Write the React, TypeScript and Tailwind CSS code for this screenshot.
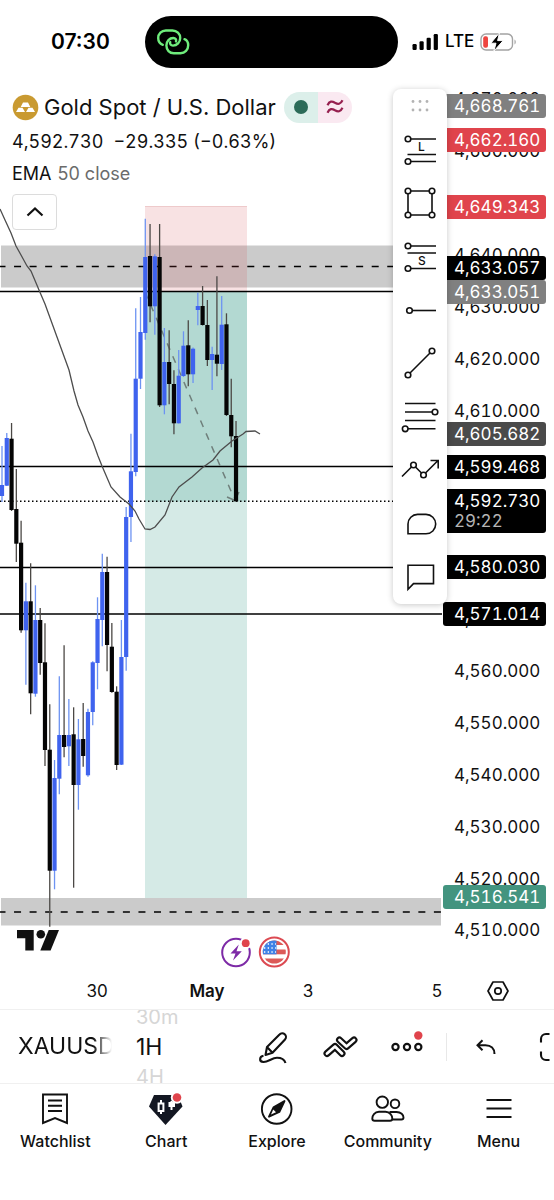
import type { ReactNode } from "react";
import clsx from "clsx";

const HEADER_HEIGHT = 84;
const CANDLE_STEP = 4.776;
const PX_PER_UNIT = 5.195;

const UP = "#3f63ee";
const DOWN = "#050505";

// body top, body bottom, wick top, wick bottom, 1 = up
const candles: [number, number, number, number, number][] = [
  [485, 496, 446, 502, 1],
  [438, 485.7, 433, 486, 1],
  [438.7, 510, 423, 511, 0],
  [509, 543.7, 469, 562, 0],
  [542.7, 630.3, 520.7, 632.7, 0],
  [601.3, 630.3, 582.7, 684.7, 1],
  [601.3, 693.3, 563.3, 714.3, 0],
  [620, 693.7, 585.3, 696.7, 1],
  [620, 663, 608, 674.7, 0],
  [662.3, 750, 623.3, 766, 0],
  [749.7, 870.7, 704.3, 926.7, 0],
  [778, 870.7, 760, 889.3, 1],
  [735, 778.7, 676.3, 794.3, 1],
  [735, 747, 645.3, 757.3, 0],
  [735, 746.3, 699, 766, 1],
  [734.3, 785, 707.3, 887.7, 0],
  [739.3, 785, 719, 809.7, 1],
  [739, 756, 703, 766.7, 0],
  [712, 775.3, 708.7, 776.7, 1],
  [662.3, 712, 661.3, 725.3, 1],
  [619, 663, 597.3, 689.3, 1],
  [572, 620, 553.7, 646.3, 1],
  [572, 645, 556.7, 671.3, 0],
  [646.7, 692, 623, 692.7, 0],
  [691.7, 765, 686.3, 770, 0],
  [657, 764.7, 620, 765, 1],
  [517, 657, 507, 670.7, 1],
  [471.3, 517, 433.7, 542, 1],
  [378.7, 472, 308.3, 476.3, 1],
  [332, 378.7, 297, 389, 1],
  [257, 333, 218.7, 339.7, 1],
  [256, 306.3, 224, 322.3, 0],
  [256.3, 306.3, 254.3, 334.7, 1],
  [257, 405.3, 224, 407, 0],
  [362, 405.3, 328, 414.3, 1],
  [362, 384, 330.3, 404.3, 0],
  [384, 423.3, 370.3, 434.3, 0],
  [375.7, 423.3, 350, 423.5, 1],
  [345.7, 376, 331.3, 377, 1],
  [345.3, 374.3, 320.3, 386.3, 0],
  [348.7, 374.3, 347.5, 383, 1],
  [306, 310, 292.7, 325.3, 1],
  [306, 325, 286, 325.5, 0],
  [325, 360, 300, 366, 0],
  [354, 360, 346.7, 390, 1],
  [354.7, 363.7, 276.3, 376.3, 0],
  [324.7, 364, 296, 370, 1],
  [324.3, 415, 313.3, 416, 0],
  [415, 436.3, 378.7, 447.3, 0],
  [436, 501.3, 421, 501.5, 0],
];

const emaPoints =
  "0,209 5,220 11,233 16,246 21,255 27,266 31,271 39,290 45,304 69,370 74,391 78,405 83,417 88,431 93,442 98,456 102,466 111,487 120,497 129,504 135,511 139,519 145,529 150,529.5 155,527 165,515 172,497 179,487 192,477 202,468 213,460 220,451 232,441 243,434 246,431.5 255,431 260,434";

const levels = [291.5, 466.5, 567.5, 614];

// these ticks sit fully behind a price tag
const coveredTicks = [4650, 4600, 4590];
const ticks = Array.from({ length: 17 }, (_, i) => 4670 - i * 10).filter(
  (price) => !coveredTicks.includes(price)
);

const tags = [
  { text: "4,668.761", y: 106, bg: "bg-[#808080]" },
  { text: "4,662.160", y: 140, bg: "bg-[#e0444c]" },
  { text: "4,649.343", y: 207, bg: "bg-[#e0444c]" },
  { text: "4,633.057", y: 268, bg: "bg-black" },
  { text: "4,633.051", y: 292, bg: "bg-[#808080]" },
  { text: "4,605.682", y: 434, bg: "bg-[#4a4a4a]" },
  { text: "4,599.468", y: 467, bg: "bg-black" },
  { text: "4,592.730", y: 501, bg: "bg-black", countdown: "29:22" },
  { text: "4,580.030", y: 567, bg: "bg-black" },
  { text: "4,571.014", y: 614, bg: "bg-black" },
  { text: "4,516.541", y: 897, bg: "bg-[#43947f]" },
];

const dates = [
  { text: "30", x: 97 },
  { text: "May", x: 207, bold: true },
  { text: "3", x: 308 },
  { text: "5", x: 437 },
];

function priceToY(price: number) {
  return (4620 - price) * PX_PER_UNIT + 359 - HEADER_HEIGHT;
}

function Icon({ size, children, width = 1.6 }: { size: number; children: ReactNode; width?: number }) {
  return (
    <svg
      width={size}
      height={size}
      viewBox={`0 0 ${size} ${size}`}
      fill="none"
      stroke="#111"
      strokeWidth={width}
      className="shrink-0"
      aria-hidden="true"
    >
      {children}
    </svg>
  );
}

const glyph = { fill: "#111", stroke: "none", fontSize: 12, fontFamily: "Inter, sans-serif", fontWeight: 500 };

const drawingTools = [
  {
    label: "Long position",
    icon: (
      <>
        <circle cx="8" cy="9" r="2.8" />
        <path d="M11 9H36M7.5 24.5H36M11 31.5H36" />
        <circle cx="8" cy="31.5" r="2.8" />
        <text x="18" y="21" {...glyph}>L</text>
      </>
    ),
  },
  {
    label: "Rectangle",
    icon: (
      <>
        <path d="M11 8H29M11 32H29M8 11V29M32 11V29" />
        <circle cx="8" cy="8" r="2.8" />
        <circle cx="32" cy="8" r="2.8" />
        <circle cx="8" cy="32" r="2.8" />
        <circle cx="32" cy="32" r="2.8" />
      </>
    ),
  },
  {
    label: "Short position",
    icon: (
      <>
        <circle cx="8" cy="9" r="2.8" />
        <path d="M11 9H36M7.5 16H36M11 31.5H36" />
        <circle cx="8" cy="31.5" r="2.8" />
        <text x="18" y="28" {...glyph}>S</text>
      </>
    ),
  },
  {
    label: "Horizontal ray",
    icon: (
      <>
        <circle cx="9.5" cy="20.5" r="2.8" />
        <path d="M12.5 20.5H36" />
      </>
    ),
  },
  {
    label: "Trend line",
    icon: (
      <>
        <circle cx="32" cy="8" r="2.8" />
        <circle cx="8" cy="32" r="2.8" />
        <path d="M10 30 30 10" />
      </>
    ),
  },
  {
    label: "Fib retracement",
    icon: (
      <>
        <path d="M5 6.5H35.5M5 15H32M5 23.5H35.5M8 31.8H35.5" />
        <circle cx="35" cy="15" r="2.8" />
        <circle cx="5.2" cy="31.8" r="2.8" />
      </>
    ),
  },
  {
    label: "Path",
    icon: (
      <>
        <path d="M2 26.5 11.5 17M15.5 17 21.5 23M25.5 23 38 10.5M30.5 10.5H38.2V18.5" />
        <circle cx="13.5" cy="15" r="2.8" />
        <circle cx="23.5" cy="25" r="2.8" />
      </>
    ),
  },
  {
    label: "Callout",
    icon: <path d="M8 29.8V20A9.6 9.6 0 0 1 17.6 10.4H26A9.7 9.7 0 0 1 26 29.8Z" />,
  },
  {
    label: "Comment",
    icon: <path d="M8 8.2H33.5V26.6H13.5L8 32.2Z" />,
  },
];

const navItems = [
  {
    label: "Watchlist",
    icon: (
      <Icon size={36} width={1.9}>
        <path d="M6 3.5H30V32L18 27 6 32ZM11 9.5H25M11 14.7H25M11 20H25" />
      </Icon>
    ),
  },
  {
    label: "Chart",
    icon: (
      <svg width="36" height="36" viewBox="0 0 36 36" aria-hidden="true">
        <path d="M6 4H30L34.5 15.5 17.5 34 1 15.5Z" fill="#131722" />
        <path d="M13 9V12M13 20V23M10.6 12.5H15.4V20H10.6Z" stroke="#fff" strokeWidth="2" fill="none" />
        <path d="M23.5 10V19" stroke="#fff" strokeWidth="2" />
        <path d="M20.5 11H27V16H20.5Z" fill="#fff" />
        <circle cx="29" cy="6.5" r="6.2" fill="#fff" />
        <circle cx="29" cy="6.5" r="4.3" fill="#e0444c" />
      </svg>
    ),
  },
  {
    label: "Explore",
    icon: (
      <Icon size={36} width={1.9}>
        <circle cx="17.7" cy="18" r="14.8" />
        <path d="M25.5 10 14.5 16.3 10 25.7 20.3 21Z" fill="#111" strokeLinejoin="round" />
        <path d="M14.2 18.5 12 23.5 17 21.3Z" fill="#fff" stroke="none" />
      </Icon>
    ),
  },
  {
    label: "Community",
    icon: (
      <Icon size={36} width={1.9}>
        <circle cx="12.3" cy="11.2" r="5.7" />
        <path d="M9 20.8H15.5C20 20.8 22.3 24.500 22.3 27.500 22.3 29.200 21.500 29.800 20 29.800H4.600C3.100 29.800 2.300 29.200 2.300 27.500 2.300 24.500 4.500 20.800 9 20.800Z" strokeLinejoin="round" />
        <circle cx="25" cy="12.8" r="4.3" />
        <path d="M19.5 21H26.5C31 21 33.5 24 33.5 26.500 33.500 28 32.800 28.500 31.500 28.500H22.5" strokeLinejoin="round" />
      </Icon>
    ),
  },
  {
    label: "Menu",
    icon: (
      <Icon size={36} width={1.9}>
        <path d="M5.5 9H30.5M5.5 17.5H30.5M5.5 26H30.5" />
      </Icon>
    ),
  },
];

function StatusBar() {
  return (
    <div className="flex h-[84px] shrink-0 items-center pl-[51px]">
      <span className="w-[94px] text-[21px] font-semibold">07:30</span>
      <div className="flex h-[52px] w-[253px] shrink-0 items-center rounded-full bg-black pl-[11px]">
        <svg width="34" height="28" viewBox="0 0 34 28" fill="none" stroke="#6fec7c" strokeWidth="2.4" strokeLinecap="round" aria-hidden="true">
          <path d="M6.800 16.800C4 15.800 2.200 13.300 2.200 10 2.200 5.800 5.500 2.500 9.800 2.500H16.500C20.800 2.500 24.200 5.800 24.200 10 24.200 14.300 21 17.600 17 17.600 14.800 17.600 13.600 16 14.200 14.200" />
          <path d="M28.500 11.200C31 12.200 32.200 14.500 32.200 17.300 32.200 21.800 29 25.200 24.500 25.200H17.800C13.500 25.200 10.400 22 10.400 17.600 10.400 13 13.500 10 17.300 10 19.500 10 20.600 11.600 20 13.400" />
        </svg>
      </div>
      <div className="ml-3.5 flex items-center gap-1.5">
        <svg width="27" height="18" viewBox="0 0 27 18" aria-hidden="true">
          <rect x="0.5" y="11" width="4.2" height="6" rx="1.2" />
          <rect x="7.5" y="8.3" width="4.2" height="8.7" rx="1.2" />
          <rect x="14.6" y="4.7" width="4.2" height="12.3" rx="1.2" />
          <rect x="21.7" y="1" width="4.2" height="16" rx="1.2" />
        </svg>
        <span className="text-[17px] font-medium">LTE</span>
        <svg width="37" height="20" viewBox="0 0 37 20" fill="none" aria-hidden="true">
          <rect x="1" y="2" width="31.5" height="16" rx="5" stroke="#a3a3a3" strokeWidth="1.4" />
          <path d="M34.5 7.5C36.2 8.3 36.2 11.7 34.5 12.5Z" fill="#a3a3a3" />
          <rect x="3.2" y="4.3" width="4.8" height="11.4" rx="2" fill="#ee4540" />
          <path d="M19.5 0.8 10.8 11.2H16L13.8 19.2 23.2 8.6H17.6Z" fill="#000" stroke="#fff" strokeWidth="1" />
        </svg>
      </div>
    </div>
  );
}

function PriceChart() {
  return (
    <svg className="absolute inset-0 size-full" aria-label="XAUUSD price chart" role="img">
      <g transform={`translate(0 ${-HEADER_HEIGHT})`}>
        <rect x="1" y="245.5" width="100%" height="42" fill="#cbcbcb" />
        <rect x="1" y="898" width="440" height="27.5" fill="#cbcbcb" />
        <line x1="0" x2="100%" y1="266.5" y2="266.5" stroke="#000" strokeWidth="1.5" strokeDasharray="7 8.55" strokeDashoffset="1.5" />
        <line x1="0" x2="441" y1="912" y2="912" stroke="#000" strokeWidth="1.5" strokeDasharray="7 8.55" strokeDashoffset="1.5" />

        <rect x="145" y="206" width="102" height="85.5" fill="rgb(210 70 75 / 0.155)" />
        <line x1="145" x2="247" y1="206.5" y2="206.5" stroke="rgb(180 70 70 / 0.15)" />
        <rect x="145" y="291.5" width="102" height="606.5" fill="rgb(45 150 130 / 0.2)" />
        <rect x="145" y="291.5" width="102" height="210" fill="rgb(45 150 130 / 0.2)" />

        {levels.map((y) => (
          <line key={y} x1="0" x2="100%" y1={y} y2={y} stroke="#000" strokeWidth="1.5" />
        ))}
        <line x1="0" x2="100%" y1="501.3" y2="501.3" stroke="#000" strokeWidth="1.5" strokeDasharray="1.5 2.5" />

        <path d="M145 292 234 498" stroke="#6f7f7b" strokeWidth="1.5" strokeDasharray="7 7" fill="none" />
        <path d="M227 497 235 500.5 239 492" stroke="#6f7f7b" strokeWidth="1.5" fill="none" />

        {candles.map(([top, bottom, high, low, up], i) => {
          const x = 2 + i * CANDLE_STEP;
          return (
            <g key={i}>
              <line x1={x} x2={x} y1={high} y2={low} stroke={up ? "#6d93f2" : "#4b4845"} strokeWidth="1.3" />
              <rect x={x - 2.1} y={top} width="4.2" height={bottom - top} fill={up ? UP : DOWN} />
            </g>
          );
        })}

        <polyline points={emaPoints} fill="none" stroke="#4d4d4d" strokeWidth="1.3" />

        <g fill="#111">
          <path d="M17 930H33.7V950.5H25.3V938.3H17Z" />
          <circle cx="40.8" cy="934.2" r="4.3" />
          <path d="M48.7 930H59L50.6 950.5H40.3Z" />
        </g>

        <circle cx="236" cy="952.5" r="13.8" fill="#fff" stroke="#7d2aa6" strokeWidth="2" />
        <path d="M238.8 944.5 230.5 953.5H235.5L233 960.5 241.8 951.2H236.5Z" fill="#7d2aa6" />
        <circle cx="245.7" cy="943.2" r="6" fill="#fff" />
        <circle cx="245.7" cy="943.2" r="3.9" fill="#e0444c" />

        <clipPath id="flag">
          <circle cx="274.3" cy="952" r="11.5" />
        </clipPath>
        <circle cx="274.3" cy="952" r="14.5" fill="#fff" stroke="#dc4a52" strokeWidth="2" />
        <g clipPath="url(#flag)">
          <rect x="262" y="940" width="25" height="5" fill="#dc5a58" />
          <rect x="262" y="949.5" width="25" height="4.8" fill="#dc5a58" />
          <rect x="262" y="958.5" width="25" height="6" fill="#dc5a58" />
          <rect x="262" y="940" width="14.5" height="14.3" fill="#4082e6" />
          <path d="M264 944H276M264 948H276M264 952H276" stroke="#fff" strokeWidth="1.3" strokeDasharray="1.3 2.4" />
        </g>
      </g>
    </svg>
  );
}

function Legend() {
  return (
    <div className="absolute top-[7px] left-3 text-[#111]">
      <div className="flex h-8 items-center">
        <svg width="27" height="27" viewBox="0 0 27 27" aria-hidden="true">
          <circle cx="13.5" cy="13.5" r="12.8" fill="#c99a31" />
          <path d="M11 8.5H16L18.3 13H8.7ZM6.5 13.8H10.5L13 18H4ZM16.5 13.8H20.5L23 18H14Z" fill="#fff" />
        </svg>
        <h1 className="ml-[5px] text-[22px] whitespace-nowrap">Gold Spot / U.S. Dollar</h1>
        <div className="ml-2 flex h-[31px] overflow-hidden rounded-full">
          <span className="flex w-[34px] items-center justify-center bg-[#dcefea]">
            <span className="size-3.5 rounded-full bg-[#2b6b58]" />
          </span>
          <span className="flex w-[34px] items-center justify-center bg-[#fae9f1]">
            <svg width="18" height="16" viewBox="0 0 18 16" fill="none" stroke="#96204f" strokeWidth="2.2" aria-hidden="true">
              <path d="M1.5 6.2C3.5 1.8 6 2 9 3.8 12 5.5 14.5 5.5 16.5 1.3M1.5 13.7C3.5 9.3 6 9.5 9 11.3 12 13 14.5 13 16.5 8.8" />
            </svg>
          </span>
        </div>
      </div>
      <div className="mt-0.5 flex h-8 items-center gap-2.5 text-[18px] tabular-nums">
        <span>4,592.730</span>
        <span>−29.335 (−0.63%)</span>
      </div>
      <div className="flex h-8 items-center gap-1.5 text-[18px]">
        <span>EMA</span>
        <span className="text-[#6b6b6b]">50 close</span>
      </div>
      <button type="button" aria-label="Collapse legend" className="mt-[5px] flex h-9 w-[45px] items-center justify-center rounded border border-[#dcdcdc] bg-white">
        <Icon size={20} width={2.2}>
          <path d="M2.5 13.5 10 6.5 17.5 13.5" />
        </Icon>
      </button>
    </div>
  );
}

function PriceAxis() {
  return (
    <div className="relative w-28 shrink-0 overflow-hidden text-[17px] text-[#111] tabular-nums">
      {ticks.map((price) => (
        <span key={price} className="absolute left-3 leading-6" style={{ top: priceToY(price) - 12 }}>
          {price.toLocaleString("en-US", { minimumFractionDigits: 3 })}
        </span>
      ))}
      {tags.map((tag) => (
        <div
          key={tag.text}
          className={clsx("absolute right-2 left-px rounded-[3px] pl-[11px] leading-6 text-white", tag.bg)}
          style={{ top: tag.y - 12 - HEADER_HEIGHT }}
        >
          {tag.text}
          {tag.countdown && <div className="pb-1 leading-4 text-[#b5b5b5]">{tag.countdown}</div>}
        </div>
      ))}
    </div>
  );
}

function DrawingToolbar() {
  return (
    <div className="absolute top-[5px] right-[107px] flex h-[515px] w-[54px] flex-col rounded-lg bg-white shadow-[0_1px_6px_rgba(0,0,0,0.22)]">
      <div className="flex h-[34px] items-center justify-center">
        <svg width="20" height="14" viewBox="0 0 20 14" fill="#b3b3b3" aria-hidden="true">
          {[3, 10, 17].map((x) => (
            <g key={x}>
              <circle cx={x} cy="2.5" r="1.4" />
              <circle cx={x} cy="11" r="1.4" />
            </g>
          ))}
        </svg>
      </div>
      {drawingTools.map((tool) => (
        <button key={tool.label} type="button" aria-label={tool.label} className="flex flex-1 items-center justify-center">
          <Icon size={40}>{tool.icon}</Icon>
        </button>
      ))}
    </div>
  );
}

function TimeAxis() {
  return (
    <div className="flex h-[37px] shrink-0 text-[17px] text-[#111]">
      <div className="relative flex-1">
        {dates.map((date) => (
          <span
            key={date.text}
            className={clsx("absolute -translate-x-1/2 leading-[38px]", date.bold && "font-semibold")}
            style={{ left: date.x }}
          >
            {date.text}
          </span>
        ))}
      </div>
      <button type="button" aria-label="Chart settings" className="flex w-28 items-center justify-center">
        <Icon size={24} width={1.7}>
          <path d="M7 3H17L22 12 17 21H7L2 12Z" strokeLinejoin="round" />
          <circle cx="12" cy="12" r="3.2" />
        </Icon>
      </button>
    </div>
  );
}

function SymbolToolbar() {
  return (
    <div className="flex h-[74px] shrink-0 items-center overflow-hidden border-t border-[#f0f0f0] pl-[18px] text-[#111]">
      <button type="button" className="w-[94px] shrink-0 overflow-hidden mask-r-from-80% text-left text-[23px]">
        XAUUSD
      </button>
      <div className="ml-6 flex w-[103px] shrink-0 flex-col items-start">
        <button type="button" className="text-[20px] leading-[30px] text-[#d6d6d6]">30m</button>
        <button type="button" className="text-[23px] leading-[30px]">1H</button>
        <button type="button" className="text-[20px] leading-[30px] text-[#d6d6d6]">4H</button>
      </div>
      <button type="button" aria-label="Draw" className="flex w-[67px] shrink-0 justify-center">
        <Icon size={36} width={2.1}>
          <path d="M10.5 26 12 18 24.5 5.5A3.4 3.4 0 0 1 30 10.5L17.5 23.8ZM12 18 17.5 23.8" strokeLinejoin="round" />
          <path d="M8.5 26.8C4.5 27.5 3.5 32.5 8.5 33 13 33.2 17 28.8 22 28.8 27 28.8 29.5 31 30.5 34" />
        </Icon>
      </button>
      <button type="button" aria-label="Indicators" className="flex w-[67px] shrink-0 justify-center">
        <Icon size={36}>
          <g strokeLinecap="round" strokeLinejoin="round">
            <path d="M5 24.5 13 17.5 20 24.5" strokeWidth="7" />
            <path d="M5 24.5 13 17.5 20 24.5" stroke="#fff" strokeWidth="2.8" />
            <path d="M17.5 11 24.5 17.5 32 11" strokeWidth="7" />
            <path d="M17.5 11 24.5 17.5 32 11" stroke="#fff" strokeWidth="2.8" />
          </g>
        </Icon>
      </button>
      <button type="button" aria-label="More" className="flex w-[67px] shrink-0 justify-center">
        <Icon size={36} width={2.2}>
          <circle cx="6.5" cy="18" r="3.1" />
          <circle cx="18" cy="18" r="3.1" />
          <circle cx="29.3" cy="18" r="3.1" />
          <circle cx="29.3" cy="6.5" r="4.2" fill="#e0444c" stroke="none" />
        </Icon>
      </button>
      <div className="ml-1.5 h-7 w-px shrink-0 bg-[#e8e8e8]" />
      <button type="button" aria-label="Undo" className="ml-3.5 flex w-[50px] shrink-0 justify-center">
        <Icon size={24} width={2}>
          <path d="M8.5 5.2 3.5 10.2 8.5 15.2M3.5 10.2H11.5C17 10.2 20.5 13.5 20.5 19" />
        </Icon>
      </button>
      <button type="button" aria-label="Fullscreen" className="ml-7 shrink-0">
        <Icon size={32} width={2.1}>
          <path d="M2 11.5V8A5 5 0 0 1 7 3H10.5M2 20.5V24A5 5 0 0 0 7 29H10.5M30 11.5V8A5 5 0 0 0 25 3H21.5M30 20.5V24A5 5 0 0 1 25 29H21.5" />
        </Icon>
      </button>
    </div>
  );
}

function BottomNav() {
  return (
    <nav className="grid shrink-0 grid-cols-5 border-t border-[#f0f0f0] pt-[7px] pb-[49px] text-[#111]">
      {navItems.map((item) => (
        <a key={item.label} href="#" className="flex flex-col items-center gap-1">
          {item.icon}
          <span className="text-[16px] leading-5 font-medium">{item.label}</span>
        </a>
      ))}
    </nav>
  );
}

export default function App() {
  return (
    <div className="flex min-h-screen flex-col overflow-hidden bg-white font-['Inter',sans-serif]">
      <StatusBar />
      <main className="relative flex min-h-[560px] flex-1">
        <div className="relative flex-1 overflow-hidden">
          <PriceChart />
        </div>
        <PriceAxis />
        <Legend />
        <DrawingToolbar />
      </main>
      <TimeAxis />
      <SymbolToolbar />
      <BottomNav />
    </div>
  );
}
